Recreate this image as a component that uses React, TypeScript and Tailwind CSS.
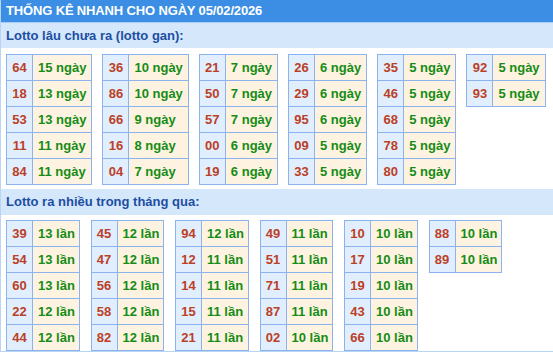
import React from "react";

type Row = [string, string];

const gan: Row[][] = [
  [["64", "15 ngày"], ["18", "13 ngày"], ["53", "13 ngày"], ["11", "11 ngày"], ["84", "11 ngày"]],
  [["36", "10 ngày"], ["86", "10 ngày"], ["66", "9 ngày"], ["16", "8 ngày"], ["04", "7 ngày"]],
  [["21", "7 ngày"], ["50", "7 ngày"], ["57", "7 ngày"], ["00", "6 ngày"], ["19", "6 ngày"]],
  [["26", "6 ngày"], ["29", "6 ngày"], ["95", "6 ngày"], ["09", "5 ngày"], ["33", "5 ngày"]],
  [["35", "5 ngày"], ["46", "5 ngày"], ["68", "5 ngày"], ["78", "5 ngày"], ["80", "5 ngày"]],
  [["92", "5 ngày"], ["93", "5 ngày"]],
];

const nhieu: Row[][] = [
  [["39", "13 lần"], ["54", "13 lần"], ["60", "13 lần"], ["22", "12 lần"], ["44", "12 lần"]],
  [["45", "12 lần"], ["47", "12 lần"], ["56", "12 lần"], ["58", "12 lần"], ["82", "12 lần"]],
  [["94", "12 lần"], ["12", "11 lần"], ["14", "11 lần"], ["15", "11 lần"], ["21", "11 lần"]],
  [["49", "11 lần"], ["51", "11 lần"], ["71", "11 lần"], ["87", "11 lần"], ["02", "10 lần"]],
  [["10", "10 lần"], ["17", "10 lần"], ["19", "10 lần"], ["43", "10 lần"], ["66", "10 lần"]],
  [["88", "10 lần"], ["89", "10 lần"]],
];

function LottoTable({ rows, fixed }: { rows: Row[]; fixed?: boolean }) {
  return (
    <table className="border-collapse self-start">
      <tbody>
        {rows.map(([n, v], i) => (
          <tr key={i} className="h-[26px]">
            <td className="border border-[#8db3ee] bg-[#e1eefd] text-[#bb4026] w-[26px] p-0 text-center align-middle">
              {n}
            </td>
            <td className="border border-[#8db3ee] bg-[#fef3e1] text-[#158c15] px-[5px] py-0 align-middle whitespace-nowrap">
              {fixed ? <div className="w-[35.5px] whitespace-nowrap">{v}</div> : v}
            </td>
          </tr>
        ))}
      </tbody>
    </table>
  );
}

export default function App() {
  return (
    <div className="w-[553px] h-[353px] overflow-hidden bg-white font-['Liberation_Sans',Arial,sans-serif] font-bold text-[13px]">
      <div className="h-[352px] border-l border-b border-[#b7d4f4]">
        <div className="h-[22px] bg-[#3b8ee3] text-white leading-[22px] pl-[5px] tracking-[-0.15px]">
          THỐNG KÊ NHANH CHO NGÀY 05/02/2026
        </div>
        <div className="h-[26px] bg-[#d5e8fb] border-t border-[#a9cdf2] text-[#1c4ea3] leading-[25px] pl-[5px]">
          Lotto lâu chưa ra (lotto gan):
        </div>
        <div className="flex gap-[10px] pl-[5px] pt-[6px] h-[141px]">
          {gan.map((t, i) => (
            <LottoTable key={i} rows={t} />
          ))}
        </div>
        <div className="h-[26px] bg-[#d5e8fb] text-[#1c4ea3] leading-[26px] pl-[5px]">
          Lotto ra nhiều trong tháng qua:
        </div>
        <div className="flex gap-[11px] pl-[5px] pt-[5px]">
          {nhieu.map((t, i) => (
            <LottoTable key={i} rows={t} fixed />
          ))}
        </div>
      </div>
    </div>
  );
}
